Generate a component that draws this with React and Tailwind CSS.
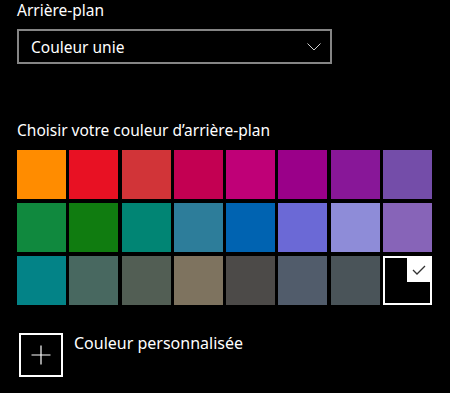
import React from "react";

const colors = [
  "#FF8C00", "#E81123", "#D13438", "#C30052", "#BF0077", "#9A0089", "#881798", "#744DA9",
  "#10893E", "#107C10", "#018574", "#2D7D9A", "#0063B1", "#6B69D6", "#8E8CD8", "#8764B8",
  "#038387", "#486860", "#525E54", "#7E735F", "#4C4A48", "#515C6B", "#4A5459", "#000000",
];

export default function App() {
  const selected = 23;

  return (
    <div
      className="w-[450px] h-[393px] bg-black text-white pl-[17px] overflow-hidden"
      style={{ fontFamily: '"Noto Sans", "Open Sans", sans-serif' }}
    >
      {/* Background type */}
      <div className="text-[15.5px] leading-[20px]">Arrière-plan</div>
      <div className="mt-[9px] w-[315px] h-[35px] border-2 border-[#858585] flex items-center justify-between pl-[12px] pr-[9px]">
        <span className="text-[15.5px] leading-[20px]">Couleur unie</span>
        <svg width="14" height="8" viewBox="0 0 14 8" fill="none">
          <path d="M0.5 0.5 L7 7 L13.5 0.5" stroke="#d0d0d0" strokeWidth="1" />
        </svg>
      </div>

      {/* Colour picker */}
      <div className="mt-[56px] text-[15.5px] leading-[20px]">
        Choisir votre couleur d’arrière-plan
      </div>
      <div className="mt-[10px] w-[415px] grid grid-cols-8 gap-x-[3.4px] gap-y-[4px]">
        {colors.map((c, i) =>
          i === selected ? (
            <div key={i} className="h-[49px] border-2 border-white bg-black flex justify-end items-start">
              <div className="w-[23px] h-[24px] bg-white flex items-center justify-center">
                <svg width="14" height="10" viewBox="0 0 14 10" fill="none">
                  <path d="M1 5 L5 9 L13 1" stroke="#333" strokeWidth="1.3" />
                </svg>
              </div>
            </div>
          ) : (
            <div key={i} className="h-[49px]" style={{ backgroundColor: c }} />
          )
        )}
      </div>

      {/* Custom colour */}
      <div className="mt-[28px] flex items-start gap-[11px] pl-[2px]">
        <div className="w-[44px] h-[44px] border-2 border-white flex items-center justify-center">
          <svg width="20" height="20" viewBox="0 0 20 20" fill="none">
            <path d="M10 0.5 V19.5 M0.5 10 H19.5" stroke="#fff" strokeWidth="1.2" />
          </svg>
        </div>
        <span className="text-[16px] leading-[20px]">Couleur personnalisée</span>
      </div>
    </div>
  );
}
